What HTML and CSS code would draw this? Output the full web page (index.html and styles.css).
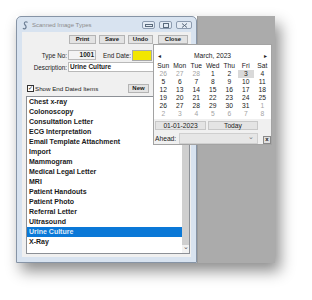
FILE: index.html
```html
<html>
<head>
<meta name="viewport" content="width=device-width, initial-scale=1">
<link rel="stylesheet" href="styles.css">
</head>
<body>
<div class="shot">
  <div class="win">
    <div class="titlebar">
      <svg class="appicon" width="7" height="9" viewBox="0 0 7 9"><path d="M5.5 1.5 C4 0 2 1 2.5 3 C3 4.5 4.5 4.5 4 6.5 C3.6 8 1.8 8.3 1 7.2" fill="none" stroke="#6d7f95" stroke-width="1.2"/></svg>
      <span class="title">Scanned Image Types</span>
      <div class="caps">
        <span class="cap"><svg width="8" height="5" viewBox="0 0 8 5"><rect x="0.5" y="1.5" width="7" height="2" fill="none" stroke="#5a6a7c"/></svg></span>
        <span class="cap"><svg width="8" height="5" viewBox="0 0 8 5"><rect x="1.5" y="0.5" width="5" height="4" fill="none" stroke="#5a6a7c"/></svg></span>
        <span class="cap wide"><svg width="7" height="5" viewBox="0 0 7 5"><path d="M1 0.5 L6 4.5 M6 0.5 L1 4.5" stroke="#5a6a7c" stroke-width="1"/></svg></span>
      </div>
    </div>
    <div class="client">
      <div class="toolbar">
        <button class="btn w27">Print</button>
        <button class="btn w26">Save</button>
        <button class="btn w25">Undo</button>
        <button class="btn w30 far">Close</button>
      </div>
      <div class="row r1">
        <span class="lbl">Type No:</span>
        <span class="field num">1001</span>
        <span class="lbl2">End Date:</span>
        <span class="field yellow"></span>
      </div>
      <div class="row r2">
        <span class="lbl">Description:</span>
        <span class="field desc">Urine Culture</span>
      </div>
      <div class="row r3">
        <span class="chk"><span class="box">&#10003;</span>Show End Dated Items</span>
        <button class="btn newbtn">New</button>
      </div>
      <div class="list">
        <ul class="items">
          <li>Chest x-ray</li>
          <li>Colonoscopy</li>
          <li>Consultation Letter</li>
          <li>ECG Interpretation</li>
          <li>Email Template Attachment</li>
          <li>Import</li>
          <li>Mammogram</li>
          <li>Medical Legal Letter</li>
          <li>MRI</li>
          <li>Patient Handouts</li>
          <li>Patient Photo</li>
          <li>Referral Letter</li>
          <li>Ultrasound</li>
          <li class="sel">Urine Culture</li>
          <li>X-Ray</li>
        </ul>
        <div class="vscroll"><span class="sarrow">&#8964;</span></div>
      </div>
    </div>
  </div>
  <div class="desk"></div>

  <div class="cal">
    <div class="calhead"><span class="nav">&#9666;</span><span>March, 2023</span><span class="nav">&#9656;</span></div>
    <div class="days">
      <span>Sun</span><span>Mon</span><span>Tue</span><span>Wed</span><span>Thu</span><span>Fri</span><span>Sat</span>
      <span class="off">26</span><span class="off">27</span><span class="off">28</span><span>1</span><span>2</span><span class="today">3</span><span>4</span>
      <span>5</span><span>6</span><span>7</span><span>8</span><span>9</span><span>10</span><span>11</span>
      <span>12</span><span>13</span><span>14</span><span>15</span><span>16</span><span>17</span><span>18</span>
      <span>19</span><span>20</span><span>21</span><span>22</span><span>23</span><span>24</span><span>25</span>
      <span>26</span><span>27</span><span>28</span><span>29</span><span>30</span><span>31</span><span class="off">1</span>
      <span class="off">2</span><span class="off">3</span><span class="off">4</span><span class="off">5</span><span class="off">6</span><span class="off">7</span><span class="off">8</span>
    </div>
    <div class="calfoot">
      <div class="footrow">
        <span class="pill datepill">01-01-2023</span>
        <span class="pill todaypill">Today</span>
      </div>
      <div class="footrow ahead">
        <span class="alabel">Ahead:</span>
        <span class="combo"><span class="chev">&#8964;</span></span>
        <span class="xbtn">x</span>
      </div>
    </div>
  </div>
</div>
</body>
</html>
```

FILE: styles.css
```css
body {
  margin: 0;
  background-color: #ffffff;
  font-family: "Liberation Sans", Arial, sans-serif;
  color: #1a1a1a;
}

.shot {
  position: relative;
  margin: 16px 0 0 16px;
  width: 259px;
  height: 247px;
  display: flex;
  box-shadow: 5px 8px 14px rgba(0, 0, 0, 0.45);
}

/* window frame */
.win {
  box-sizing: border-box;
  width: 181px;
  height: 247px;
  border: 1px solid #8694a6;
  border-radius: 5px 5px 0 0;
  background: #d8e3f0;
  padding: 0 5px 5px 5px;
  display: flex;
  flex-direction: column;
}

.titlebar {
  height: 15px;
  display: flex;
  align-items: center;
}

.appicon {
  margin: 1px 3px 0 0;
}

.title {
  font-size: 6px;
  color: #8c8c8c;
  flex: 1;
}

.caps {
  display: flex;
  gap: 4px;
  margin-top: 1px;
  margin-right: -1px;
}

.cap {
  box-sizing: border-box;
  width: 13px;
  height: 8px;
  border: 1px solid #8c9bb0;
  border-radius: 2px;
  background: #e4ebf4;
  display: flex;
  align-items: center;
  justify-content: center;
}

.cap.wide {
  width: 16px;
}

.client {
  flex: 1;
  background: #f0f0f0;
  padding-top: 3px;
}

.btn {
  box-sizing: border-box;
  height: 9px;
  padding: 0;
  border: 1px solid #b4b4b4;
  background: #e3e3e3;
  font-family: "Liberation Sans", Arial, sans-serif;
  font-weight: bold;
  font-size: 6px;
  line-height: 7px;
  color: #1a1a1a;
}

.toolbar {
  display: flex;
  gap: 3px;
  margin-left: 47px;
}

.w25 { width: 25px; }
.w26 { width: 26px; }
.w27 { width: 27px; }
.w30 { width: 30px; }
.far { margin-left: 2px; }

.row {
  display: flex;
  align-items: center;
  height: 10px;
}

.r1 { margin-top: 6px; }
.r2 { margin-top: 2px; }
.r3 { margin-top: 12px; height: 9px; }

.lbl {
  width: 45px;
  text-align: right;
  font-size: 6.3px;
  padding-right: 1px;
}

.lbl2 {
  font-size: 6.3px;
  margin: 0 1px 0 7px;
}

.field {
  box-sizing: border-box;
  height: 10px;
  border: 1px solid #b9b9b9;
  background: #ffffff;
  font-weight: bold;
  font-size: 6.5px;
  line-height: 8px;
}

.num {
  width: 28px;
  text-align: right;
  padding-right: 1px;
  background: #f4f4f4;
}

.yellow {
  width: 20px;
  height: 11px;
  background: #f2e600;
  border-color: #a9a9a9;
}

.desc {
  width: 110px;
  padding-left: 1px;
}

.chk {
  display: flex;
  align-items: center;
  font-size: 6.2px;
  margin-left: 5px;
  width: 101px;
}

.box {
  box-sizing: border-box;
  width: 7px;
  height: 7px;
  border: 1px solid #333;
  background: #fff;
  font-size: 6px;
  line-height: 5px;
  text-align: center;
  margin-right: 1px;
}

.newbtn {
  width: 21px;
}

/* list */
.list {
  box-sizing: border-box;
  margin: 3px 0 0 4px;
  width: 164px;
  height: 158px;
  border: 1px solid #8c9096;
  background: #ffffff;
  display: flex;
}

.items {
  list-style: none;
  margin: 0;
  padding: 0;
  flex: 1;
}

.items li {
  height: 10px;
  line-height: 10px;
  font-size: 7px;
  font-weight: bold;
  padding-left: 2px;
}

.items li.sel {
  background: #0a78d7;
  color: #dfeaf7;
}

.vscroll {
  width: 7px;
  background: #cfcfcf;
  display: flex;
  align-items: flex-end;
}

.sarrow {
  width: 7px;
  height: 8px;
  background: #f2f2f2;
  font-size: 7px;
  line-height: 4px;
  text-align: center;
  color: #555;
}

.desk {
  flex: 1;
  background: #ababab;
  border-left: 1px solid #9a9a9a;
}

/* date popup over the window */
.cal {
  position: absolute;
  left: 137px;
  top: 28px;
  box-sizing: border-box;
  width: 119px;
  height: 101px;
  border: 1px solid #a3a3a3;
  background: #f0f0f0;
  font-size: 6.7px;
}

.calhead {
  background: #ffffff;
  display: flex;
  justify-content: space-between;
  padding: 6px 4px 1px 4px;
  height: 10px;
  line-height: 10px;
}

.nav {
  font-size: 6px;
  color: #222;
}

.days {
  background: #ffffff;
  display: grid;
  grid-template-columns: repeat(7, 16.5px);
  grid-auto-rows: 8px;
  padding: 0 1px 1px 1px;
  line-height: 8px;
  text-align: center;
}

.days .off {
  color: #a3a3a3;
}

.days .today {
  background: #d9d9d9;
}

.calfoot {
  padding: 2px 0 0 1px;
}

.footrow {
  display: flex;
  gap: 2px;
}

.pill {
  box-sizing: border-box;
  height: 9px;
  line-height: 8px;
  border: 1px solid #c8c8c8;
  background: #e4e4e4;
  text-align: center;
}

.datepill { width: 51px; }
.todaypill { width: 50px; }

.ahead {
  margin-top: 3px;
  gap: 0;
  align-items: center;
}

.alabel {
  width: 24px;
}

.combo {
  box-sizing: border-box;
  width: 79px;
  height: 11px;
  border: 1px solid #cfcfcf;
  background: #e6e6e6;
  display: flex;
  justify-content: flex-end;
}

.chev {
  color: #777;
  font-size: 7px;
  line-height: 6px;
  padding-right: 3px;
}

.xbtn {
  box-sizing: border-box;
  width: 8px;
  height: 8px;
  margin: 2px 0 0 5px;
  border: 1px solid #8a8a8a;
  background: #e0e0e0;
  font-weight: bold;
  font-size: 6px;
  line-height: 5px;
  text-align: center;
}
```
